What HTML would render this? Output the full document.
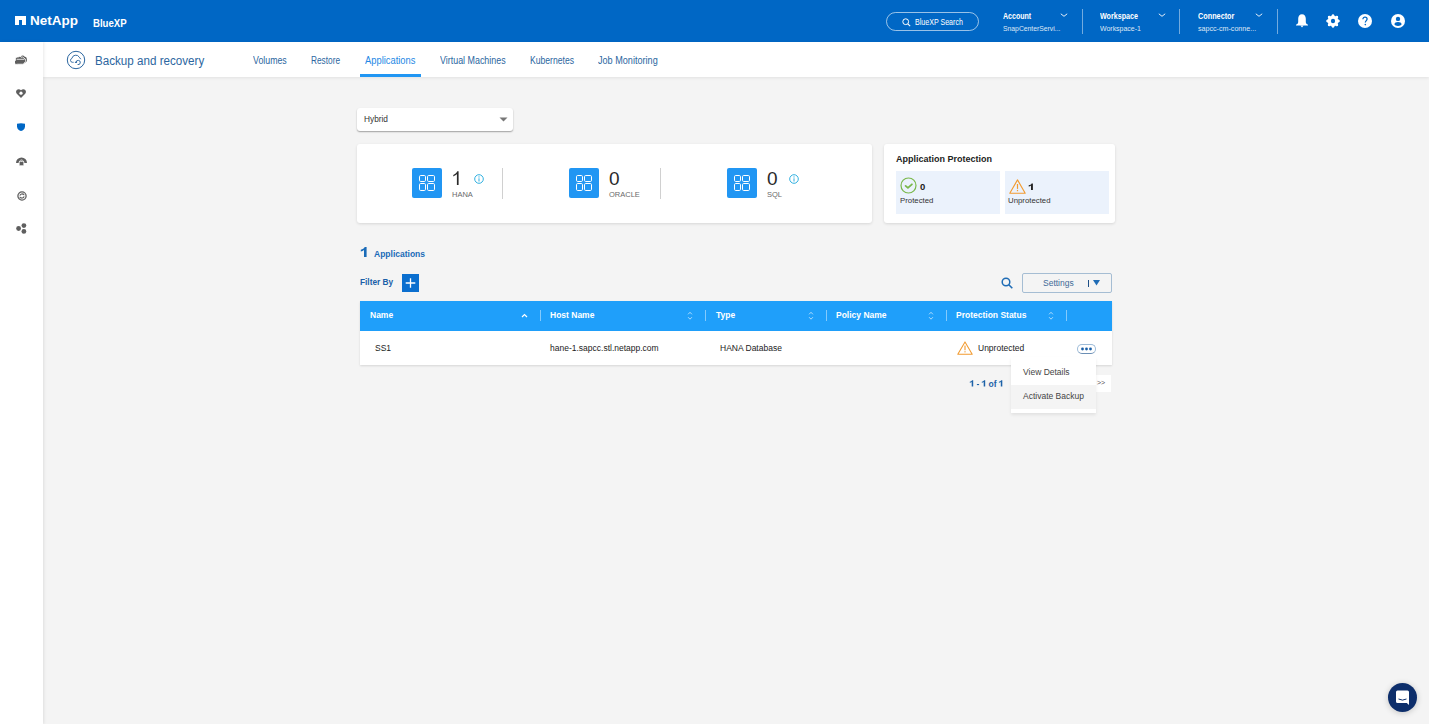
<!DOCTYPE html>
<html><head><meta charset="utf-8">
<style>
*{box-sizing:border-box;margin:0;padding:0}
html,body{width:1429px;height:724px;overflow:hidden;background:#f4f4f4;font-family:"Liberation Sans",sans-serif;position:relative}
.abs{position:absolute}
#hdr{left:0;top:0;width:1429px;height:42px;background:#0067c5}
#side{left:0;top:42px;width:43px;height:682px;background:#fff;box-shadow:1px 0 3px rgba(0,0,0,.09);z-index:2}
#nav{left:43px;top:42px;width:1386px;height:35px;background:#fff;box-shadow:0 1px 3px rgba(0,0,0,.08)}
.t{position:absolute;white-space:nowrap;line-height:1}
.wt{color:#fff}
.navl{color:#2b66a0;font-size:10px}
.card{position:absolute;background:#fff;border-radius:3px;box-shadow:0 1px 3px rgba(0,0,0,.12)}
.ibox{position:absolute;width:30px;height:30px;background:#2196f3;border-radius:2px}
.big{font-size:19px;color:#2a2a2a}
.lbl{font-size:7.5px;color:#6a6a6a}
.vdiv{position:absolute;width:1px;background:#d0d0d0}
.th{color:#fff;font-weight:bold;font-size:8.5px}
.td{color:#222;font-size:8.5px}
.hdiv{position:absolute;width:1px;height:11px;top:310px;background:rgba(255,255,255,.45)}
</style></head><body>
<div id="hdr" class="abs">
  <!-- logo -->
  <div class="abs" style="left:15px;top:16px;width:11px;height:9px;background:#fff"></div>
  <div class="abs" style="left:19px;top:20px;width:3px;height:5px;background:#0067c5"></div>
  <div class="t wt" style="left:30px;top:14px;font-size:13.5px;font-weight:bold;letter-spacing:0px">NetApp</div>
  <div class="t wt" style="left:93px;top:18px;font-size:10.5px;font-weight:bold;transform:scaleX(.916);transform-origin:0 0">BlueXP</div>
  <!-- search pill -->
  <div class="abs" style="left:886px;top:12px;width:93px;height:19px;border:1px solid rgba(255,255,255,.6);border-radius:10px"></div>
  <svg class="abs" style="left:902px;top:18px" width="9" height="9" viewBox="0 0 9 9"><circle cx="3.7" cy="3.7" r="2.9" fill="none" stroke="#fff" stroke-width="1"/><line x1="5.8" y1="5.8" x2="8.2" y2="8.2" stroke="#fff" stroke-width="1.1"/></svg>
  <div class="t wt" style="left:915px;top:18px;font-size:8.5px;transform:scaleX(.833);transform-origin:0 0">BlueXP Search</div>
  <!-- account -->
  <div class="t wt" style="left:1003px;top:12px;font-size:8.5px;font-weight:bold;transform:scaleX(.83);transform-origin:0 0">Account</div>
  <div class="t wt" style="left:1003px;top:25px;font-size:8px;opacity:.85;transform:scaleX(.85);transform-origin:0 0">SnapCenterServi...</div>
  <div class="abs" style="left:1082px;top:9px;width:1px;height:25px;background:rgba(255,255,255,.45)"></div>
  <div class="t wt" style="left:1100px;top:12px;font-size:8.5px;font-weight:bold;transform:scaleX(.84);transform-origin:0 0">Workspace</div>
  <div class="t wt" style="left:1100px;top:25px;font-size:8px;opacity:.85;transform:scaleX(.87);transform-origin:0 0">Workspace-1</div>
  <div class="abs" style="left:1179px;top:9px;width:1px;height:25px;background:rgba(255,255,255,.45)"></div>
  <div class="t wt" style="left:1198px;top:12px;font-size:8.5px;font-weight:bold;transform:scaleX(.856);transform-origin:0 0">Connector</div>
  <div class="t wt" style="left:1198px;top:25px;font-size:8px;opacity:.85;transform:scaleX(.89);transform-origin:0 0">sapcc-cm-conne...</div>
  <div class="abs" style="left:1277px;top:9px;width:1px;height:25px;background:rgba(255,255,255,.45)"></div>
  <svg class="abs" style="left:1060px;top:13px" width="8" height="4" viewBox="0 0 8 4"><polyline points="0.8,0.8 4,3.3 7.2,0.8" fill="none" stroke="#fff" stroke-width="0.9"/></svg>
  <svg class="abs" style="left:1158px;top:13px" width="8" height="4" viewBox="0 0 8 4"><polyline points="0.8,0.8 4,3.3 7.2,0.8" fill="none" stroke="#fff" stroke-width="0.9"/></svg>
  <svg class="abs" style="left:1255px;top:13px" width="8" height="4" viewBox="0 0 8 4"><polyline points="0.8,0.8 4,3.3 7.2,0.8" fill="none" stroke="#fff" stroke-width="0.9"/></svg>
  <!-- icons -->
  <svg class="abs" style="left:1296px;top:14px" width="12" height="14" viewBox="0 0 12 14"><path d="M6 0.3C3.6 0.3 2.2 2.3 2.2 4.8V8C2.2 9.3 1.2 10.2 0 10.8V11.6H12V10.8C10.8 10.2 9.8 9.3 9.8 8V4.8C9.8 2.3 8.4 0.3 6 0.3Z" fill="#fff"/><path d="M4.4 11.5H7.6L6 13.6Z" fill="#fff"/></svg>
  <svg class="abs" style="left:1326px;top:13.5px" width="14" height="14" viewBox="0 0 14 14"><path d="M7.00 0.00 L8.21 0.92 L8.91 2.38 L10.44 1.84 L11.95 2.05 L12.16 3.56 L11.62 5.09 L13.08 5.79 L14.00 7.00 L13.08 8.21 L11.62 8.91 L12.16 10.44 L11.95 11.95 L10.44 12.16 L8.91 11.62 L8.21 13.08 L7.00 14.00 L5.79 13.08 L5.09 11.62 L3.56 12.16 L2.05 11.95 L1.84 10.44 L2.38 8.91 L0.92 8.21 L0.00 7.00 L0.92 5.79 L2.38 5.09 L1.84 3.56 L2.05 2.05 L3.56 1.84 L5.09 2.38 L5.79 0.92Z" fill="#fff"/><circle cx="7" cy="7" r="4.9" fill="#fff"/><ellipse cx="7" cy="7" rx="2.1" ry="2.3" fill="#0067c5"/></svg>
  <svg class="abs" style="left:1358px;top:14px" width="14" height="14" viewBox="0 0 14 14"><circle cx="7" cy="7" r="7" fill="#fff"/><path d="M4.9 5.2C4.9 3.9 5.9 3.1 7 3.1S9.1 3.9 9.1 5.1C9.1 6.5 7.3 6.8 7.3 8.6" fill="none" stroke="#0067c5" stroke-width="1.25"/><circle cx="7.3" cy="10.6" r="0.8" fill="#0067c5"/></svg>
  <svg class="abs" style="left:1391px;top:14px" width="14" height="14" viewBox="0 0 14 14"><circle cx="7" cy="7" r="7" fill="#fff"/><circle cx="7" cy="4.9" r="2.2" fill="#0067c5"/><path d="M3.4 10.3C3.6 8.9 5 8.1 7 8.1S10.4 8.9 10.6 10.3C10.1 11.2 8.8 11.9 7 11.9S3.9 11.2 3.4 10.3Z" fill="#0067c5"/></svg>
</div>

<div id="side" class="abs">
  <svg class="abs" style="left:15px;top:13px" width="13" height="10" viewBox="0 0 13 10"><path d="M6 1.6A2 2 0 0 1 9.4 1.4 2.6 2.6 0 0 1 11.8 4.3 2.2 2.2 0 0 1 10.2 7.4H7Z" fill="#5f5f5f"/><path d="M3.3 2.1A1.7 1.7 0 0 1 6.2 2.3 1.7 1.7 0 0 1 8.9 3.2 2.3 2.3 0 0 1 9.6 7.4 2 2 0 0 1 7.9 9.2H2.6A2.2 2.2 0 0 1 0.6 5.2 2.2 2.2 0 0 1 3.3 2.1Z" fill="#5f5f5f" stroke="#fff" stroke-width="0.8"/><path d="M1.6 4.3H9.4" stroke="#fff" stroke-width="0.8"/></svg>
  <svg class="abs" style="left:16px;top:47px" width="10" height="9" viewBox="0 0 10 9"><path d="M5 9L0.8 4.8C-0.3 3.6 -0.2 1.6 1 0.7 2.2 -0.2 3.9 0.1 5 1.3 6.1 0.1 7.8 -0.2 9 0.7 10.2 1.6 10.3 3.6 9.2 4.8Z" fill="#5f5f5f"/><circle cx="5" cy="4.2" r="1.6" fill="#fff"/></svg>
  <svg class="abs" style="left:17px;top:81px" width="8" height="8" viewBox="0 0 8 8"><path d="M0 0.8Q4 -0.2 8 0.8V3.5C8 6 6 7.5 4 8 2 7.5 0 6 0 3.5Z" fill="#0067c5"/></svg>
  <svg class="abs" style="left:16px;top:114px" width="11" height="10" viewBox="0 0 11 10"><path d="M0 7A5.5 5.5 0 0 1 11 7H8.2A2.7 2.7 0 0 0 2.8 7Z" fill="#5f5f5f"/><rect x="3.2" y="5.4" width="4.6" height="4.3" rx="0.6" fill="#5f5f5f" stroke="#fff" stroke-width="0.7"/><path d="M4.3 5.6V4.9A1.2 1.2 0 0 1 6.7 4.9V5.6" fill="none" stroke="#fff" stroke-width="0.7"/><path d="M4.6 5.6V5A0.9 0.9 0 0 1 6.4 5V5.6" fill="none" stroke="#5f5f5f" stroke-width="0.6"/></svg>
  <svg class="abs" style="left:16.5px;top:148.5px" width="10" height="10" viewBox="0 0 10 10"><circle cx="5" cy="5" r="4.1" fill="none" stroke="#5f5f5f" stroke-width="1.3"/><path d="M2.9 4.7A2.1 2.1 0 0 1 6.8 4M7.1 5.3A2.1 2.1 0 0 1 3.2 6" fill="none" stroke="#5f5f5f" stroke-width="1.1"/><path d="M5.9 3.1L7.4 4.4 7.2 2.5Z M4.1 6.9L2.6 5.6 2.8 7.5Z" fill="#5f5f5f"/></svg>
  <svg class="abs" style="left:16px;top:181px" width="11" height="11" viewBox="0 0 11 11"><circle cx="2.6" cy="5.5" r="2.4" fill="#5f5f5f"/><circle cx="7.9" cy="2.6" r="2.4" fill="#5f5f5f"/><circle cx="7.9" cy="8.4" r="2.4" fill="#5f5f5f"/></svg>
</div>

<div id="nav" class="abs"><div class="abs" style="left:1px;top:0;width:1385px;height:35px">
  <svg class="abs" style="left:22px;top:8px" width="20" height="20" viewBox="0 0 20 20"><circle cx="10" cy="10" r="8.7" fill="none" stroke="#2b66a0" stroke-width="1"/><path d="M7.6 12.3H6.4A2 2 0 0 1 5.9 8.4A4 4 0 0 1 13.3 7.2L14.8 9.2" fill="none" stroke="#2b66a0" stroke-width="0.95" stroke-linejoin="round"/><path d="M10.1 12.4A2.1 2.1 0 1 1 11.6 14.5" fill="none" stroke="#2b66a0" stroke-width="0.95"/><path d="M8.6 12.9L10.1 11.1 11.2 12.9Z" fill="#2b66a0"/></svg>
  <div class="t" style="left:51px;top:13px;font-size:12.5px;color:#2b66a0;transform:scaleX(.93);transform-origin:0 0">Backup and recovery</div>
  <div class="t navl" style="left:209px;top:14px;transform:scaleX(.88);transform-origin:0 0">Volumes</div>
  <div class="t navl" style="left:267px;top:14px;transform:scaleX(.83);transform-origin:0 0">Restore</div>
  <div class="t navl" style="left:321px;top:14px;color:#1e88e5;transform:scaleX(.935);transform-origin:0 0">Applications</div>
  <div class="abs" style="left:316px;top:32px;width:61px;height:3px;background:#2196f3"></div>
  <div class="t navl" style="left:396px;top:14px;transform:scaleX(.89);transform-origin:0 0">Virtual Machines</div>
  <div class="t navl" style="left:486px;top:14px;transform:scaleX(.86);transform-origin:0 0">Kubernetes</div>
  <div class="t navl" style="left:554px;top:14px;transform:scaleX(.91);transform-origin:0 0">Job Monitoring</div>
</div>
</div>


<!-- dropdown -->
<div class="abs" style="left:357px;top:108px;width:156px;height:23px;background:#fff;border-radius:3px;box-shadow:0 1px 1.5px rgba(0,0,0,.35)"></div>
<div class="t" style="left:364px;top:115px;font-size:8.3px;color:#333">Hybrid</div>
<svg class="abs" style="left:499px;top:117px" width="9" height="5" viewBox="0 0 9 5"><path d="M0.5 0.5H8.5L4.5 4.5Z" fill="#777"/></svg>

<!-- app counts card -->
<div class="card" style="left:357px;top:144px;width:515px;height:79px">
  <div class="ibox" style="left:55px;top:24px"><svg class="abs" style="left:7px;top:7px" width="16" height="16" viewBox="0 0 16 16"><g fill="none" stroke="#fff" stroke-width="1"><rect x="0.5" y="0.5" width="6" height="6" rx="1.2"/><rect x="8.5" y="0.5" width="7" height="6" rx="1.2"/><rect x="0.5" y="8.5" width="6" height="7" rx="1.2"/><rect x="8.5" y="8.5" width="7" height="7" rx="1.2"/></g></svg></div>
  <svg class="abs" style="left:93px;top:26px" width="12" height="16" viewBox="0 0 12 16"><path d="M8.6 1.2H7.3C6.5 2.8 5 4.2 3.3 4.9V6.4C5 5.8 6.1 5 6.9 4.1V14.9H8.6Z" fill="#2a2a2a"/></svg>
  <svg class="abs" style="left:117px;top:30px" width="10" height="10" viewBox="0 0 10 10"><circle cx="5" cy="5" r="4.3" fill="none" stroke="#1aa7dc" stroke-width="0.9"/><rect x="4.55" y="4.3" width="0.9" height="3.2" fill="#1aa7dc"/><circle cx="5" cy="2.9" r="0.55" fill="#1aa7dc"/></svg>
  <div class="t lbl" style="left:95px;top:47px">HANA</div>
  <div class="vdiv" style="left:145px;top:24px;height:31px"></div>
  <div class="ibox" style="left:212px;top:24px"><svg class="abs" style="left:7px;top:7px" width="16" height="16" viewBox="0 0 16 16"><g fill="none" stroke="#fff" stroke-width="1"><rect x="0.5" y="0.5" width="6" height="6" rx="1.2"/><rect x="8.5" y="0.5" width="7" height="6" rx="1.2"/><rect x="0.5" y="8.5" width="6" height="7" rx="1.2"/><rect x="8.5" y="8.5" width="7" height="7" rx="1.2"/></g></svg></div>
  <div class="t big" style="left:252px;top:25px">0</div>
  <div class="t lbl" style="left:252px;top:47px">ORACLE</div>
  <div class="vdiv" style="left:303px;top:24px;height:31px"></div>
  <div class="ibox" style="left:370px;top:24px"><svg class="abs" style="left:7px;top:7px" width="16" height="16" viewBox="0 0 16 16"><g fill="none" stroke="#fff" stroke-width="1"><rect x="0.5" y="0.5" width="6" height="6" rx="1.2"/><rect x="8.5" y="0.5" width="7" height="6" rx="1.2"/><rect x="0.5" y="8.5" width="6" height="7" rx="1.2"/><rect x="8.5" y="8.5" width="7" height="7" rx="1.2"/></g></svg></div>
  <div class="t big" style="left:410px;top:25px">0</div>
  <svg class="abs" style="left:432px;top:30px" width="10" height="10" viewBox="0 0 10 10"><circle cx="5" cy="5" r="4.3" fill="none" stroke="#1aa7dc" stroke-width="0.9"/><rect x="4.55" y="4.3" width="0.9" height="3.2" fill="#1aa7dc"/><circle cx="5" cy="2.9" r="0.55" fill="#1aa7dc"/></svg>
  <div class="t lbl" style="left:410px;top:47px">SQL</div>
</div>

<!-- app protection card -->
<div class="card" style="left:884px;top:144px;width:231px;height:79px">
  <div class="t" style="left:12px;top:11px;font-size:9px;font-weight:bold;color:#222">Application Protection</div>
  <div class="abs" style="left:12px;top:27px;width:104px;height:43px;background:#ebf2fc"></div>
  <div class="abs" style="left:121px;top:27px;width:104px;height:43px;background:#ebf2fc"></div>
  <svg class="abs" style="left:16px;top:33px" width="17" height="17" viewBox="0 0 17 17"><circle cx="8.5" cy="8.5" r="7.5" fill="none" stroke="#79b84b" stroke-width="1.2"/><polyline points="5.6,8.9 7.9,10.9 11.9,7.3" fill="none" stroke="#79b84b" stroke-width="1.8" stroke-linejoin="round" stroke-linecap="round"/></svg>
  <div class="t" style="left:36px;top:38px;font-size:9.5px;font-weight:bold;color:#222">0</div>
  <div class="t" style="left:16px;top:53px;font-size:7.8px;color:#333">Protected</div>
  <svg class="abs" style="left:124.5px;top:35px" width="17" height="15" viewBox="0 0 17 15"><path d="M8.5 0.9L16.2 14.2H0.8Z" fill="none" stroke="#f29b30" stroke-width="1.1" stroke-linejoin="round"/><rect x="7.9" y="5" width="1.2" height="4.9" fill="#f29b30"/><rect x="7.9" y="10.9" width="1.2" height="1.3" fill="#f29b30"/></svg>
  <svg class="abs" style="left:143px;top:38px" width="8" height="10" viewBox="0 0 8 10"><path d="M5.9 1.5H4.6C4.2 2.4 3.1 3.1 1.7 3.3V4.6C2.7 4.5 3.4 4.1 4 3.6V8.1H5.9Z" fill="#222"/></svg>
  <div class="t" style="left:124px;top:53px;font-size:7.8px;color:#333">Unprotected</div>
</div>

<!-- applications count -->
<svg class="abs" style="left:358px;top:245px" width="10" height="13" viewBox="0 0 10 13"><path d="M8.6 2H6.7C6.1 3.3 4.6 4.3 2.8 4.8V6.6C4.1 6.3 5.2 5.7 6 5V12H8.6Z" fill="#1a6bb8"/></svg>
<div class="t" style="left:374px;top:250px;font-size:8.5px;font-weight:bold;color:#1a6bb8">Applications</div>
<div class="t" style="left:360px;top:278px;font-size:8.3px;font-weight:bold;color:#1a5fa8">Filter By</div>
<div class="abs" style="left:402px;top:274px;width:17px;height:18px;background:#0b6fcf"></div>
<svg class="abs" style="left:402px;top:274px" width="17" height="18" viewBox="0 0 17 18"><path d="M8.5 4.2V13.8M3.7 9H13.3" stroke="#fff" stroke-width="1.3"/></svg>

<!-- search + settings -->
<svg class="abs" style="left:1001px;top:277px" width="13" height="12" viewBox="0 0 13 12"><circle cx="5" cy="5" r="3.8" fill="none" stroke="#1f6cb5" stroke-width="1.5"/><line x1="7.8" y1="7.8" x2="11.3" y2="11.3" stroke="#1f6cb5" stroke-width="1.6"/></svg>
<div class="abs" style="left:1022px;top:273px;width:90px;height:20px;border:1px solid #a5bdd3;border-radius:2px"></div>
<div class="t" style="left:1043px;top:279px;font-size:8.5px;color:#3f6a98">Settings</div>
<div class="abs" style="left:1088px;top:280px;width:1.3px;height:7px;background:#1d4f86"></div>
<svg class="abs" style="left:1093px;top:280px" width="7" height="6" viewBox="0 0 7 6"><path d="M0 0H7L3.5 5.5Z" fill="#1f6cb5"/></svg>

<!-- table -->
<div class="abs" style="left:360px;top:301px;width:752px;height:64px;background:#fff;box-shadow:0 1px 2px rgba(0,0,0,.12)"></div>
<div class="abs" style="left:360px;top:301px;width:752px;height:30px;background:#1f9ffa"></div>
<div class="t th" style="left:370px;top:311px">Name</div>
<svg class="abs" style="left:521px;top:313px" width="7" height="5" viewBox="0 0 7 5"><polyline points="1,4 3.5,1.5 6,4" fill="none" stroke="#fff" stroke-width="1.2"/></svg>
<div class="hdiv" style="left:540px"></div>
<div class="t th" style="left:550px;top:311px">Host Name</div>
<svg class="abs" style="left:687px;top:310px" width="6" height="11" viewBox="0 0 6 11"><polyline points="1.1,4.3 3,2.3 4.9,4.3" fill="none" stroke="rgba(255,255,255,.62)" stroke-width="1"/><polyline points="1.1,7.2 3,9.2 4.9,7.2" fill="none" stroke="rgba(255,255,255,.62)" stroke-width="1"/></svg>
<div class="hdiv" style="left:705px"></div>
<div class="t th" style="left:716px;top:311px">Type</div>
<svg class="abs" style="left:808px;top:310px" width="6" height="11" viewBox="0 0 6 11"><polyline points="1.1,4.3 3,2.3 4.9,4.3" fill="none" stroke="rgba(255,255,255,.62)" stroke-width="1"/><polyline points="1.1,7.2 3,9.2 4.9,7.2" fill="none" stroke="rgba(255,255,255,.62)" stroke-width="1"/></svg>
<div class="hdiv" style="left:826px"></div>
<div class="t th" style="left:836px;top:311px">Policy Name</div>
<svg class="abs" style="left:928px;top:310px" width="6" height="11" viewBox="0 0 6 11"><polyline points="1.1,4.3 3,2.3 4.9,4.3" fill="none" stroke="rgba(255,255,255,.62)" stroke-width="1"/><polyline points="1.1,7.2 3,9.2 4.9,7.2" fill="none" stroke="rgba(255,255,255,.62)" stroke-width="1"/></svg>
<div class="hdiv" style="left:946px"></div>
<div class="t th" style="left:956px;top:311px">Protection Status</div>
<svg class="abs" style="left:1048px;top:310px" width="6" height="11" viewBox="0 0 6 11"><polyline points="1.1,4.3 3,2.3 4.9,4.3" fill="none" stroke="rgba(255,255,255,.62)" stroke-width="1"/><polyline points="1.1,7.2 3,9.2 4.9,7.2" fill="none" stroke="rgba(255,255,255,.62)" stroke-width="1"/></svg>
<div class="hdiv" style="left:1066px"></div>
<div class="t td" style="left:375px;top:344px">SS1</div>
<div class="t td" style="left:550px;top:344px">hane-1.sapcc.stl.netapp.com</div>
<div class="t td" style="left:720px;top:344px">HANA Database</div>
<svg class="abs" style="left:957px;top:341px" width="16" height="14" viewBox="0 0 16 14"><path d="M8 0.9L15.2 13.3H0.8Z" fill="none" stroke="#f29b30" stroke-width="1.05" stroke-linejoin="round"/><rect x="7.45" y="4.6" width="1.1" height="4.6" fill="#f29b30"/><rect x="7.45" y="10.2" width="1.1" height="1.2" fill="#f29b30"/></svg>
<div class="t td" style="left:978px;top:344px">Unprotected</div>
<div class="abs" style="left:1077px;top:344px;width:19px;height:10px;border:1px solid #9dbbd8;border-bottom-color:#6b8fb5;border-radius:5px;background:#fff"></div>
<svg class="abs" style="left:1077px;top:344px" width="19" height="10" viewBox="0 0 19 10"><circle cx="5.5" cy="5" r="1.4" fill="#1a5fa8"/><circle cx="9.5" cy="5" r="1.4" fill="#1a5fa8"/><circle cx="13.5" cy="5" r="1.4" fill="#1a5fa8"/></svg>

<!-- pagination -->
<svg class="abs" style="left:969px;top:380px" width="36" height="8" viewBox="0 0 36 8"><g fill="#1d62a8"><path transform="translate(0.8 0.2)" d="M3.4 0H2.3C1.9 0.8 1 1.3 0 1.5V2.6C0.8 2.5 1.4 2.2 1.9 1.8V6.4H3.4Z"/><rect x="7.9" y="4" width="2.2" height="1.1"/><path transform="translate(12.8 0.2)" d="M3.4 0H2.3C1.9 0.8 1 1.3 0 1.5V2.6C0.8 2.5 1.4 2.2 1.9 1.8V6.4H3.4Z"/><path transform="translate(29.9 0.2)" d="M3.4 0H2.3C1.9 0.8 1 1.3 0 1.5V2.6C0.8 2.5 1.4 2.2 1.9 1.8V6.4H3.4Z"/></g></svg>
<div class="t" style="left:988.5px;top:379.5px;font-size:8.5px;font-weight:bold;color:#1d62a8">of</div>
<div class="abs" style="left:1095px;top:375px;width:16px;height:17px;background:#fff"></div>
<div class="t" style="left:1097px;top:379px;font-size:7px;color:#555">&gt;&gt;</div>

<!-- menu -->
<div class="abs" style="left:1011px;top:357px;width:85px;height:56px;background:#fff;box-shadow:0 2px 3px rgba(0,0,0,.08)"></div>
<div class="abs" style="left:1011px;top:385px;width:85px;height:24px;background:#f4f4f4"></div>
<div class="t" style="left:1023px;top:368px;font-size:8.5px;color:#444">View Details</div>
<div class="t" style="left:1023px;top:392px;font-size:8.5px;color:#444">Activate Backup</div>

<!-- chat bubble -->
<div class="abs" style="left:1388px;top:683px;width:29px;height:29px;border-radius:50%;background:#0d2e6b;box-shadow:0 1px 6px rgba(0,0,0,.2)"></div>
<svg class="abs" style="left:1396px;top:690px" width="14" height="16" viewBox="0 0 14 16"><path d="M1.5 0.5H11.5Q13 0.5 13 2V15L10.8 13H1.5Q0 13 0 11.5V2Q0 0.5 1.5 0.5Z" fill="#fff"/><path d="M2.5 9Q6.5 11.2 10.5 9" fill="none" stroke="#0d2e6b" stroke-width="1"/></svg>
</body></html>
